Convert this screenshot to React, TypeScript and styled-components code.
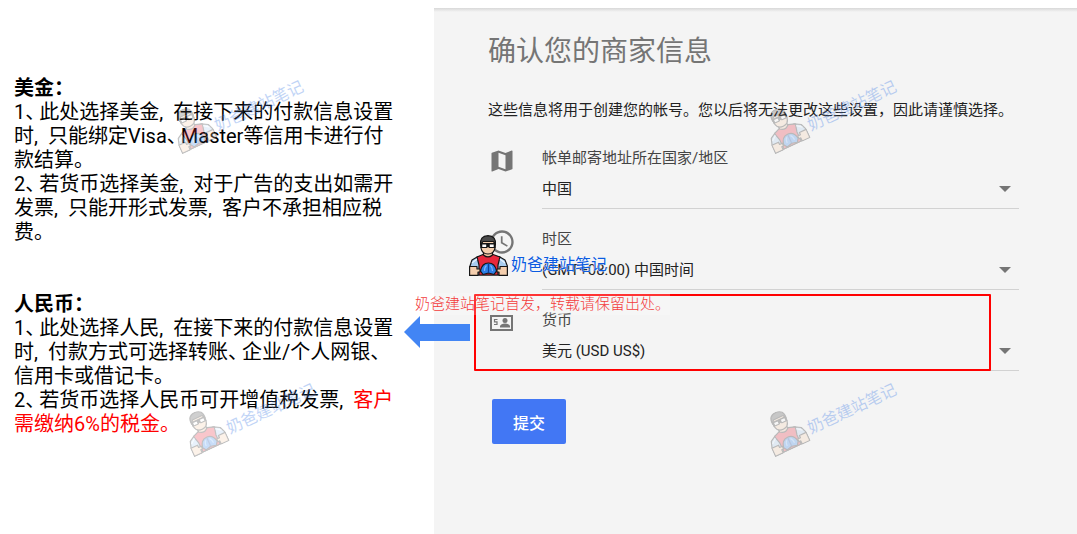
import React from "react";
import styled, { createGlobalStyle } from "styled-components";
import { MdMap, MdAccessTime } from "react-icons/md";

const GlobalStyle = createGlobalStyle`
  *, *::before, *::after { box-sizing: border-box; }
  body {
    margin: 0;
    background: #fff;
    font-family: Roboto, "Noto Sans CJK SC", sans-serif;
  }
`;

const Page = styled.div`
  position: relative;
  display: grid;
  grid-template-columns: 27fr 40fr;
  min-height: 100vh;
  overflow: hidden;
`;

const Notes = styled.aside`
  display: flex;
  flex-direction: column;
  gap: 48px;
  padding: 76px 0 0 14px;
  color: #000;
  font-size: 20px;
  line-height: 24px;
  white-space: nowrap;
`;

const Note = styled.section``;

const NoteTitle = styled.h2`
  margin: 0;
  font-size: 20px;
  line-height: 24px;
  font-weight: 700;
`;

const NoteText = styled.p`
  margin: 0;
`;

const Mark = styled.span`
  display: inline-block;
  width: 14px;
  font-feature-settings: "halt";
`;

const Warning = styled.span`
  color: #f00;
`;

const Panel = styled.main`
  margin-top: 8px;
  padding: 24px 58px 40px 54px;
  background: linear-gradient(#d8d8d8, #f4f4f4 4px);
`;

const Title = styled.h1`
  margin: 0;
  color: #757575;
  font-size: 28px;
  line-height: 40px;
  font-weight: 400;
`;

const Intro = styled.p`
  margin: 27px 0 26px;
  color: #222;
  font-size: 15px;
  line-height: 22px;
  white-space: nowrap;
`;

const Form = styled.form`
  display: flex;
  flex-direction: column;
  gap: 19px;
`;

const Row = styled.div`
  position: relative;
  display: flex;
  gap: 26px;
  color: #757575;

  > svg {
    flex: none;
  }
`;

const Field = styled.div`
  position: relative;
  flex: 1;
  display: flex;
  flex-direction: column;
`;

const Label = styled.label`
  color: #444;
  font-size: 15px;
  line-height: 22px;
`;

const Select = styled.select`
  height: 40px;
  padding: 0 32px 0 0;
  border: 0;
  border-bottom: 1px solid #d2d2d2;
  border-radius: 0;
  background: none;
  appearance: none;
  color: #222;
  font-family: inherit;
  font-size: 15px;
`;

const Caret = styled.span`
  position: absolute;
  right: 8px;
  bottom: 17px;
  border: 6px solid transparent;
  border-top-color: #757575;
  border-bottom: 0;
  pointer-events: none;
`;

const Submit = styled.button`
  align-self: flex-start;
  margin: 9px 0 0 4px;
  padding: 0 21px;
  height: 45px;
  border: 0;
  border-radius: 2px;
  background: #4277f4;
  color: #fff;
  font-family: inherit;
  font-size: 16px;
  font-weight: 500;
`;

const Highlight = styled.div`
  position: absolute;
  top: -15px;
  right: 28px;
  bottom: 0;
  left: -14px;
  border: 2px solid #f00;
  border-radius: 1px;
  pointer-events: none;
`;

const Pointer = styled.svg`
  position: absolute;
  top: 7px;
  left: -84px;
`;

const Notice = styled.div`
  position: absolute;
  top: -16px;
  left: -73px;
  background: rgba(255, 255, 255, 0.2);
  color: #f33c3c;
  font-size: 15px;
  line-height: 22px;
  font-weight: 300;
  white-space: nowrap;
  pointer-events: none;
`;

const Stamp = styled.div<{ $x: number; $y: number; $faded?: boolean }>`
  position: absolute;
  left: ${(p) => p.$x}px;
  top: ${(p) => p.$y}px;
  display: flex;
  align-items: center;
  gap: 3px;
  width: 138px;
  opacity: ${(p) => (p.$faded ? 0.26 : 1)};
  transform: ${(p) => (p.$faded ? "rotate(-25deg)" : "none")};
  pointer-events: none;
`;

const StampText = styled.span`
  padding-top: 20px;
  color: #0b5be0;
  font-size: 16px;
  line-height: 24px;
  text-shadow: 0 0 1px #fff, 0 0 1px #fff;
  white-space: nowrap;
`;

function Hero() {
  return (
    <svg width="39" height="41" viewBox="0 0 39 41" stroke="#161616" strokeWidth="1.2" strokeLinejoin="round">
      <path d="M1 31 L3 25 L9 21.5 H30 L36 25 L38.400 31 V40 H.6Z" fill="#a8cdf0" />
      <path d="M8 22 L14 19.500 H24 L31 22 L29 30 V40 H10 V30Z" fill="#e8283c" />
      <path d="M14.500 17 V20 Q19 24 23.500 20 V17Z" fill="#efc4a2" />
      <path d="M12 9 Q12 3 19 3 Q26 3 26 9 V13 Q25 19 19 19 Q13 19 12 13Z" fill="#f5cfae" />
      <path d="M11.600 10 Q10.500 1 19 .7 Q27.500 1 26.400 10 L24.500 6.500 H14Z" fill="#4a4a4a" />
      <path d="M12 8.500 H26 V12.500 H20.500 L19 11 L17.500 12.500 H12Z" fill="#161616" />
      <path d="M13.300 9.500 H17.200 V12 H13.300Z M20.800 9.500 H24.700 V12 H20.800Z" fill="#fff" stroke="none" />
      <path d="M11.500 36 Q13 28 19.500 28 Q26 28 27.500 36 L25 39.500 L19.500 38 L14 39.500Z" fill="#2d7fe8" />
      <path d="M19.500 29 V38" fill="none" stroke="#0f3f96" />
      <path d="M15.500 36 Q15.500 32 17.500 30.500 M23.500 36 Q23.500 32 21.500 30.500" fill="none" stroke="#7fb7f7" />
      <path d="M.6 31.500 H8 V34 H11 V37 H9 V40.400 H.6Z M38.400 31.500 H31 V34 H28 V37 H30 V40.400 H38.400Z" fill="#f5cfae" />
      <path d="M3 28 L8 24 M36 28 L31 24" fill="none" stroke="#e9f5ff" />
    </svg>
  );
}

function Watermark({ x, y, faded }: { x: number; y: number; faded?: boolean }) {
  return (
    <Stamp $x={x} $y={y} $faded={faded}>
      <Hero />
      <StampText>奶爸建站笔记</StampText>
    </Stamp>
  );
}

function CurrencyIcon() {
  return (
    <svg width="28" height="28" viewBox="0 0 28 28" fill="none" stroke="currentColor" strokeWidth="2">
      <path d="M3 7 H24 V21 H3Z" />
      <path d="M9.500 10.500 H6.500 V12.800 H9 V15.500 H6" strokeWidth="1.200" />
      <circle cx="17" cy="11.500" r="2.500" fill="currentColor" stroke="none" />
      <path d="M12 18.500 V17 Q13 14.500 17 14.500 Q21 14.500 22 17 V18.500Z" fill="currentColor" stroke="none" />
    </svg>
  );
}

interface SettingProps {
  id: string;
  label: string;
  value: string;
  icon: React.ReactNode;
  children?: React.ReactNode;
}

function Setting({ id, label, value, icon, children }: SettingProps) {
  return (
    <Row>
      {icon}
      <Field>
        <Label htmlFor={id}>{label}</Label>
        <Select id={id} defaultValue={value}>
          <option>{value}</option>
        </Select>
        <Caret />
      </Field>
      {children}
    </Row>
  );
}

export default function App() {
  return (
    <Page>
      <GlobalStyle />
      <Notes>
        <Note>
          <NoteTitle>美金{"\uFF1A"}</NoteTitle>
          <NoteText>
            1<Mark>、</Mark>此处选择美金<Mark>,</Mark>在接下来的付款信息设置<br />
            时<Mark>,</Mark>只能绑定Visa<Mark>、</Mark>Master等信用卡进行付<br />
            款结算。<br />
            2<Mark>、</Mark>若货币选择美金<Mark>,</Mark>对于广告的支出如需开<br />
            发票<Mark>,</Mark>只能开形式发票<Mark>,</Mark>客户不承担相应税<br />
            费。
          </NoteText>
        </Note>
        <Note>
          <NoteTitle>人民币{"\uFF1A"}</NoteTitle>
          <NoteText>
            1<Mark>、</Mark>此处选择人民<Mark>,</Mark>在接下来的付款信息设置<br />
            时<Mark>,</Mark>付款方式可选择转账<Mark>、</Mark>企业/个人网银<Mark>、</Mark><br />
            信用卡或借记卡。<br />
            2<Mark>、</Mark>若货币选择人民币可开增值税发票<Mark>,</Mark><Warning>客户<br />
            需缴纳6%的税金。</Warning>
          </NoteText>
        </Note>
      </Notes>
      <Panel>
        <Title>确认您的商家信息</Title>
        <Intro>这些信息将用于创建您的帐号。您以后将无法更改这些设置{"\uFF0C"}因此请谨慎选择。</Intro>
        <Form onSubmit={(e) => e.preventDefault()}>
          <Setting id="country" label="帐单邮寄地址所在国家/地区" value="中国" icon={<MdMap size={28} />} />
          <Setting id="timezone" label="时区" value="(GMT+08:00) 中国时间" icon={<MdAccessTime size={28} />}>
            <Watermark x={-19} y={5} />
          </Setting>
          <Setting id="currency" label="货币" value="美元 (USD US$)" icon={<CurrencyIcon />}>
            <Highlight />
            <Pointer width="66" height="32" viewBox="0 0 66 32">
              <path d="M0 16 L16 0 V8 H66 V25 H16 V32Z" fill="#4285f4" />
            </Pointer>
            <Notice>奶爸建站笔记首发{"\uFF0C"}转载请保留出处。</Notice>
          </Setting>
          <Submit type="submit">提交</Submit>
        </Form>
      </Panel>
      <Watermark x={167} y={84} faded />
      <Watermark x={760} y={84} faded />
      <Watermark x={179} y={387} faded />
      <Watermark x={760} y={387} faded />
    </Page>
  );
}
